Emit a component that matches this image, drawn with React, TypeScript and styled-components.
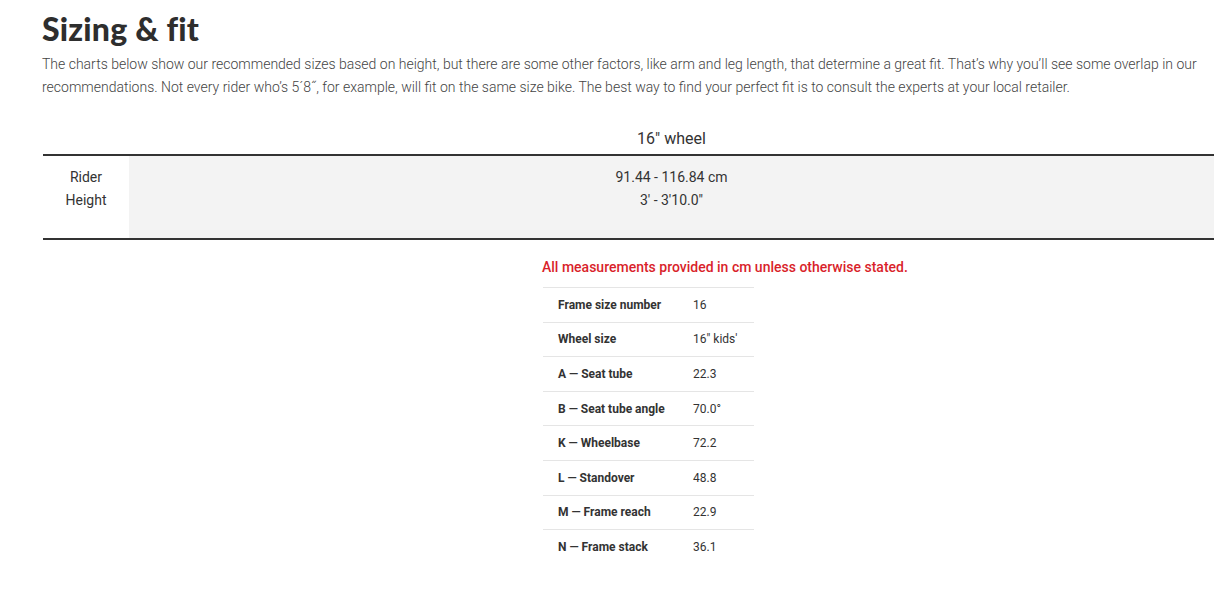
import React from 'react';
import styled, { createGlobalStyle } from 'styled-components';

type Spec = { label: string; value: string };

const specs: Spec[] = [
  { label: 'Frame size number', value: '16' },
  { label: 'Wheel size', value: '16" kids\'' },
  { label: 'A — Seat tube', value: '22.3' },
  { label: 'B — Seat tube angle', value: '70.0°' },
  { label: 'K — Wheelbase', value: '72.2' },
  { label: 'L — Standover', value: '48.8' },
  { label: 'M — Frame reach', value: '22.9' },
  { label: 'N — Frame stack', value: '36.1' },
];

const App: React.FC = () => {
  return (
    <>
      <GlobalStyle />
      <Page>
        <Title>Sizing &amp; fit</Title>
        <Intro>
          The charts below show our recommended sizes based on height, but there are some other
          factors, like arm and leg length, that determine a great fit. That’s why you’ll see some
          overlap in our recommendations. Not every rider who’s 5´8˝, for example, will fit on the
          same size bike. The best way to find your perfect fit is to consult the experts at your
          local retailer.
        </Intro>

        <SizeTable>
          <thead>
            <tr>
              <HeadCell />
              <HeadCell>16" wheel</HeadCell>
            </tr>
          </thead>
          <tbody>
            <tr>
              <RowLabel>
                Rider
                <br />
                Height
              </RowLabel>
              <RowValue>
                91.44 - 116.84 cm
                <br />
                3' - 3'10.0"
              </RowValue>
            </tr>
          </tbody>
        </SizeTable>

        <Geometry>
          <div />
          <div>
            <Notice>All measurements provided in cm unless otherwise stated.</Notice>
            <SpecTable>
              <tbody>
                {specs.map((s) => (
                  <SpecRow key={s.label}>
                    <SpecLabel>{s.label}</SpecLabel>
                    <SpecValue>{s.value}</SpecValue>
                  </SpecRow>
                ))}
              </tbody>
            </SpecTable>
          </div>
        </Geometry>
      </Page>
    </>
  );
};

const GlobalStyle = createGlobalStyle`
  body {
    margin: 0;
    background: #fff;
    font-family: Roboto, "Liberation Sans", sans-serif;
    color: #333;
  }
`;

const Page = styled.div`
  padding: 7px 8px 0 42px;
  width: 1171px;
`;

const Title = styled.h1`
  margin: 0;
  font-family: Lato, "Open Sans", sans-serif;
  font-weight: 900;
  font-size: 32px;
  line-height: 44px;
  letter-spacing: 0.2px;
  font-variant-ligatures: none;
  color: #2e2e2e;
`;

const Intro = styled.p`
  margin: 2px 0 0;
  font-size: 14px;
  line-height: 23px;
  font-weight: 300;
  color: #444;
`;

const SizeTable = styled.table`
  width: 1171px;
  margin-top: 19px;
  border-collapse: collapse;
  margin-left: 1px;
`;

const HeadCell = styled.th`
  font-size: 16px;
  font-weight: 400;
  color: #333;
  padding: 0 0 6px;
  height: 30px;
  vertical-align: bottom;
  border-bottom: 2px solid #333;
  &:first-child {
    width: 86px;
  }
`;

const RowLabel = styled.td`
  font-size: 14px;
  line-height: 23px;
  text-align: center;
  vertical-align: top;
  padding: 10px 0 0;
  height: 72px;
  color: #333;
  border-bottom: 2px solid #333;
`;

const RowValue = styled(RowLabel)`
  background: #f3f3f3;
  padding-top: 10px;
`;

const Geometry = styled.div`
  display: grid;
  grid-template-columns: 500px 1fr;
  margin-top: 17px;
`;

const Notice = styled.p`
  margin: 0 0 10px;
  font-size: 14px;
  font-weight: 500;
  line-height: 20px;
  color: #d91f2b;
`;

const SpecTable = styled.table`
  border-collapse: collapse;
  width: 211px;
  margin-left: 1px;
`;

const SpecRow = styled.tr`
  border-top: 1px solid #e5e5e5;
  height: 34.6px;
`;

const SpecLabel = styled.td`
  width: 150px;
  padding: 0 0 0 15px;
  font-size: 12px;
  font-weight: 700;
  color: #333;
  box-sizing: border-box;
`;

const SpecValue = styled.td`
  padding: 0;
  font-size: 12px;
  color: #333;
`;

export default App;
